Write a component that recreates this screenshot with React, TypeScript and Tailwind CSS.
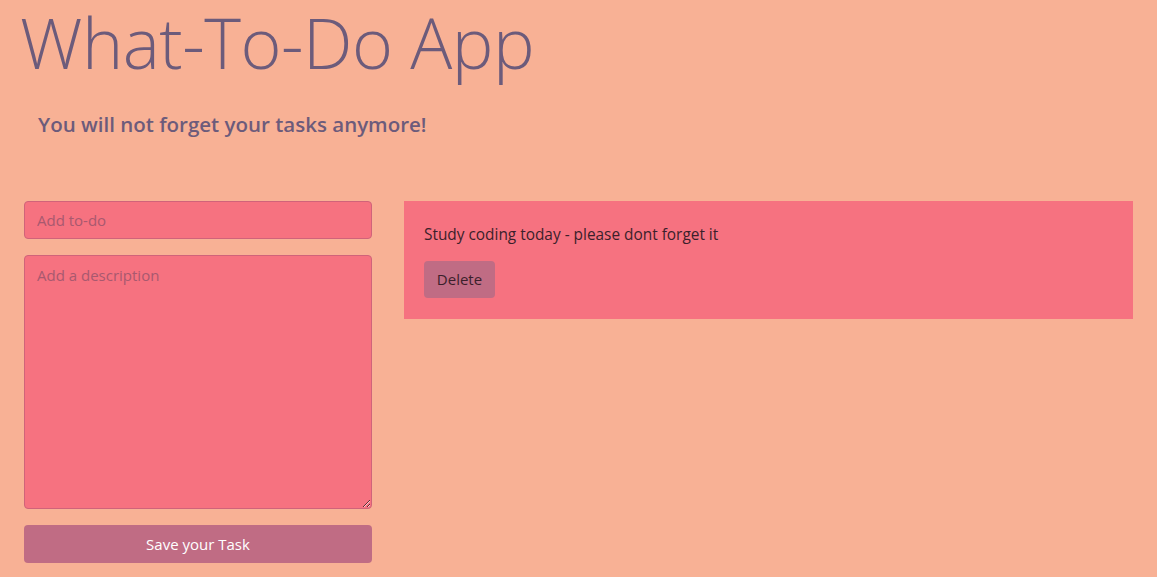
import React from "react";

export default function App() {
  const font = { fontFamily: '"Open Sans", "Noto Sans", sans-serif' };
  return (
    <div className="min-h-[577px] w-full bg-[#F8B195] text-[#6C5B7B]" style={font}>
      <div className="px-[20px] pt-0">
        <h1 className="text-[70px] font-light leading-[84px] tracking-[-0.5px] text-[#6C5B7B]">What-To-Do App</h1>
        <h4 className="mt-[26px] pl-[18px] text-[20.5px] font-semibold leading-[28px] text-[#6C5B7B]">
          You will not forget your tasks anymore!
        </h4>
      </div>
      <div className="mt-[63px] flex gap-[32px] px-[24px]">
        <div className="flex w-[348px] shrink-0 flex-col">
          <input
            className="h-[38px] w-full rounded-[4px] border border-[#d0637a] bg-[#F67280] px-[12px] text-[15px] text-[#212529] outline-none placeholder:text-[#a8596f]"
            placeholder="Add to-do"
          />
          <textarea
            className="mt-[16px] h-[254px] w-full rounded-[4px] border border-[#d0637a] bg-[#F67280] px-[12px] py-[8px] text-[15px] text-[#212529] outline-none placeholder:text-[#a8596f]"
            placeholder="Add a description"
          />
          <button className="mt-[16px] h-[38px] w-full rounded-[4px] bg-[#C06C84] text-[15px] text-white">
            Save your Task
          </button>
        </div>
        <div className="flex-1">
          <div className="h-[118px] w-full bg-[#F67280] px-[20px] pt-[22px]">
            <p className="text-[15.4px] leading-[24px] text-[#3b1f2b]">Study coding today - please dont forget it</p>
            <button className="mt-[14px] h-[37px] w-[71px] rounded-[4px] bg-[#C06C84] text-[15px] text-[#3b1f2b]">
              Delete
            </button>
          </div>
        </div>
      </div>
    </div>
  );
}
